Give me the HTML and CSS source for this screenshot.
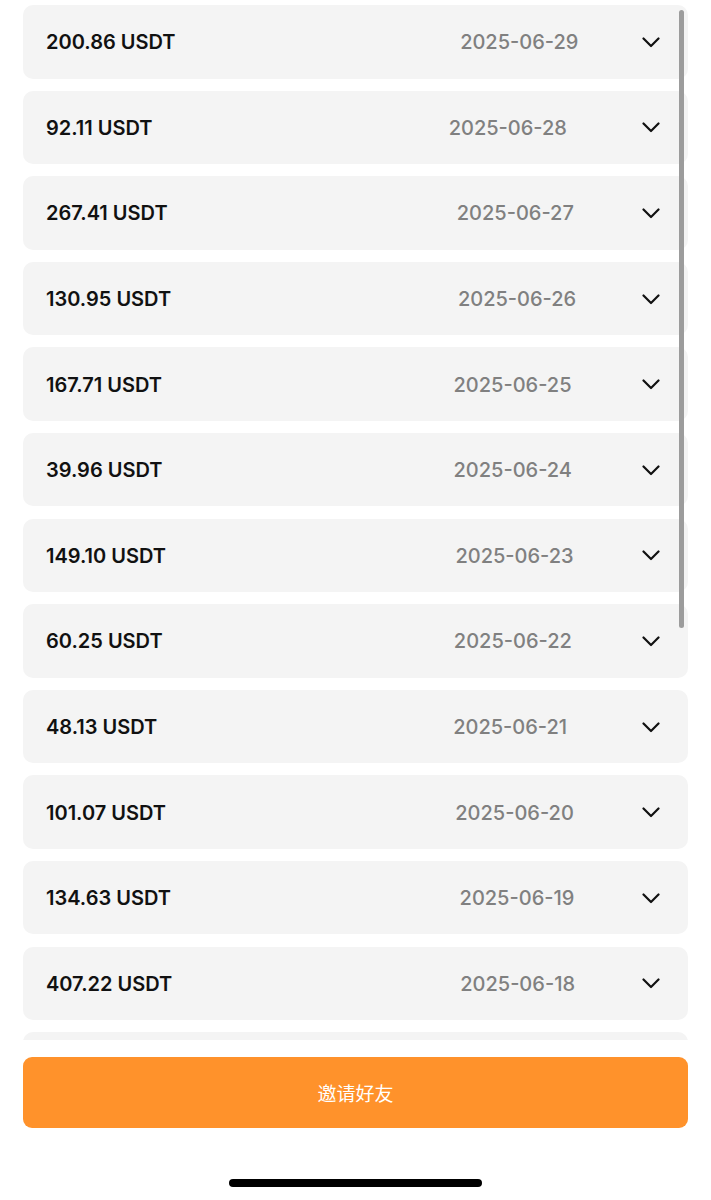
FILE: index.html
```html
<!DOCTYPE html>
<html lang="zh-CN">
<head>
    <meta charset="UTF-8">
    <meta name="viewport" content="width=device-width, initial-scale=1.0">
    <title>收益记录</title>
    <link rel="stylesheet" href="styles.css">
</head>
<body>

<div class="page">
    <div class="list-wrap">
        <div class="list">
            <div class="record"><span class="amount">200.86 USDT</span><span class="date">2025-06-29</span><svg class="chevron" viewBox="0 0 18 11"><path d="M1.5 1.5l7.5 7.5 7.5-7.5"/></svg></div>
            <div class="record"><span class="amount">92.11 USDT</span><span class="date">2025-06-28</span><svg class="chevron" viewBox="0 0 18 11"><path d="M1.5 1.5l7.5 7.5 7.5-7.5"/></svg></div>
            <div class="record"><span class="amount">267.41 USDT</span><span class="date">2025-06-27</span><svg class="chevron" viewBox="0 0 18 11"><path d="M1.5 1.5l7.5 7.5 7.5-7.5"/></svg></div>
            <div class="record"><span class="amount">130.95 USDT</span><span class="date">2025-06-26</span><svg class="chevron" viewBox="0 0 18 11"><path d="M1.5 1.5l7.5 7.5 7.5-7.5"/></svg></div>
            <div class="record"><span class="amount">167.71 USDT</span><span class="date">2025-06-25</span><svg class="chevron" viewBox="0 0 18 11"><path d="M1.5 1.5l7.5 7.5 7.5-7.5"/></svg></div>
            <div class="record"><span class="amount">39.96 USDT</span><span class="date">2025-06-24</span><svg class="chevron" viewBox="0 0 18 11"><path d="M1.5 1.5l7.5 7.5 7.5-7.5"/></svg></div>
            <div class="record"><span class="amount">149.10 USDT</span><span class="date">2025-06-23</span><svg class="chevron" viewBox="0 0 18 11"><path d="M1.5 1.5l7.5 7.5 7.5-7.5"/></svg></div>
            <div class="record"><span class="amount">60.25 USDT</span><span class="date">2025-06-22</span><svg class="chevron" viewBox="0 0 18 11"><path d="M1.5 1.5l7.5 7.5 7.5-7.5"/></svg></div>
            <div class="record"><span class="amount">48.13 USDT</span><span class="date">2025-06-21</span><svg class="chevron" viewBox="0 0 18 11"><path d="M1.5 1.5l7.5 7.5 7.5-7.5"/></svg></div>
            <div class="record"><span class="amount">101.07 USDT</span><span class="date">2025-06-20</span><svg class="chevron" viewBox="0 0 18 11"><path d="M1.5 1.5l7.5 7.5 7.5-7.5"/></svg></div>
            <div class="record"><span class="amount">134.63 USDT</span><span class="date">2025-06-19</span><svg class="chevron" viewBox="0 0 18 11"><path d="M1.5 1.5l7.5 7.5 7.5-7.5"/></svg></div>
            <div class="record"><span class="amount">407.22 USDT</span><span class="date">2025-06-18</span><svg class="chevron" viewBox="0 0 18 11"><path d="M1.5 1.5l7.5 7.5 7.5-7.5"/></svg></div>
            <!-- 下一条只露出顶部 -->
            <div class="record"></div>
        </div>
        <!-- 滚动条 -->
        <div class="scrollbar"></div>
    </div>

    <div class="footer">
        <button class="btn-invite">邀请好友</button>
    </div>

    <div class="home-bar"></div>
</div>

</body>
</html>
```

FILE: styles.css
```css
* {
    box-sizing: border-box;
}
body {
    margin: 0;
    background-color: #fff;
    font-family: Inter, "Noto Sans", "Noto Sans CJK SC", sans-serif;
}
.page {
    width: 711px;
    height: 1200px;
    display: flex;
    flex-direction: column;
}
.list-wrap {
    position: relative;
    height: 1040px;
    overflow: hidden;
}
.list {
    display: flex;
    flex-direction: column;
    gap: 12.1px;
    padding: 5px 23px 0 23px;
}
.record {
    height: 73.5px;
    flex-shrink: 0;
    display: flex;
    align-items: center;
    padding: 1px 28px 0 23px;
    background-color: #f4f4f4;
    border-radius: 10px;
}
.amount {
    font-size: 20px;
    font-weight: 600;
    color: #111;
}
.date {
    flex: 1;
    padding-left: 221px;
    font-size: 20px;
    font-weight: 500;
    color: #808080;
    text-align: center;
}
.chevron {
    width: 18px;
    height: 11px;
    fill: none;
    stroke: #111;
    stroke-width: 2.2;
    stroke-linecap: round;
    stroke-linejoin: round;
}
.scrollbar {
    position: absolute;
    top: 10px;
    left: 679px;
    width: 5px;
    height: 618px;
    border-radius: 3px;
    background-color: #9c9c9c;
}
.footer {
    padding: 17px 23px 0 23px;
}
.btn-invite {
    width: 100%;
    height: 71px;
    border: none;
    border-radius: 9px;
    background-color: #ff922b;
    color: #fff;
    font-family: "Noto Sans CJK SC", sans-serif;
    font-size: 19px;
    cursor: pointer;
}
.home-bar {
    width: 253px;
    height: 8px;
    margin: 51px auto 0 auto;
    border-radius: 4px;
    background-color: #000;
}
```
